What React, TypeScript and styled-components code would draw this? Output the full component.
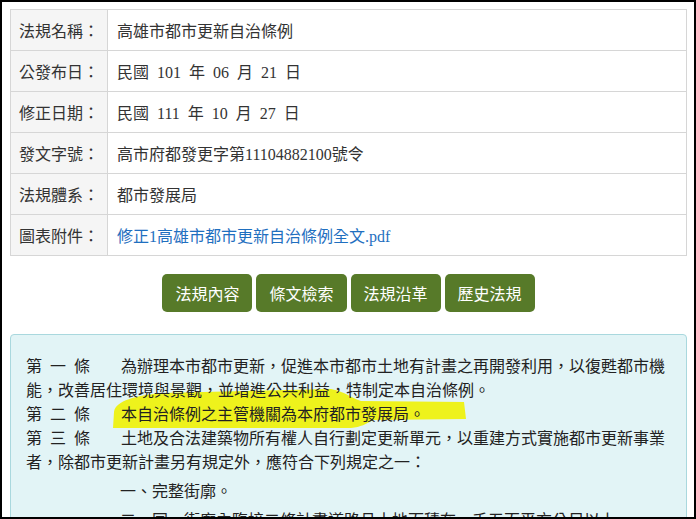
import React from 'react'
import styled, { createGlobalStyle } from 'styled-components'

const GlobalStyle = createGlobalStyle`
  html, body {
    margin: 0;
    padding: 0;
    background: #fff;
  }
`

const cjk = `"Noto Sans CJK TC", "Noto Sans", sans-serif`
const mixed = `"Liberation Serif", "Noto Sans CJK TC", serif`

const Frame = styled.div`
  width: 696px;
  height: 519px;
  box-sizing: border-box;
  border: 2px solid #000;
  overflow: hidden;
  padding: 7px 7px 0 8px;
  background: #fff;
  font-family: ${cjk};
`

const InfoTable = styled.table`
  width: 100%;
  border-collapse: collapse;
  font-size: 16px;
  color: #333;
`

const Row = styled.tr`
  height: 41px;
`

const Label = styled.th`
  width: 80px;
  padding: 0 8px;
  text-align: left;
  font-weight: 400;
  background: #f5f5f5;
  border: 1px solid #d6d6d6;
  white-space: nowrap;
`

const Value = styled.td`
  padding: 0 9px;
  border: 1px solid #d6d6d6;
  font-family: ${mixed};
  word-spacing: 4px;
`

const FileLink = styled.a`
  color: #1f6fbf;
  text-decoration: none;
  word-spacing: 0;
`

const ButtonBar = styled.div`
  display: flex;
  justify-content: center;
  gap: 4px;
  margin: 18px 0 22px;
`

const TabButton = styled.button`
  height: 38px;
  padding: 0 13px;
  border: none;
  border-radius: 5px;
  background: #577a29;
  color: #fff;
  font-family: ${cjk};
  font-size: 16px;
  cursor: pointer;
`

const ContentBox = styled.div`
  position: relative;
  z-index: 0;
  padding: 18px 14px 0 15px;
  background: #e2f4f6;
  border: 1px solid #a9d8de;
  border-radius: 4px;
  font-size: 16px;
  line-height: 24px;
  color: #222;
  height: 300px;
`

const Article = styled.div``

const ArticleNo = styled.span`
  display: inline-block;
  width: 95px;
  white-space: pre;
  word-spacing: 4.4px;
`

const Item = styled.div`
  margin-top: 5px;
  padding-left: 94px;
`

const Highlight = styled.svg`
  position: absolute;
  left: 102px;
  top: 54px;
  z-index: -1;
`

const rows: [string, React.ReactNode][] = [
  ['法規名稱：', '高雄市都市更新自治條例'],
  ['公發布日：', '民國 101 年 06 月 21 日'],
  ['修正日期：', '民國 111 年 10 月 27 日'],
  ['發文字號：', '高市府都發更字第11104882100號令'],
  ['法規體系：', '都市發展局'],
  ['圖表附件：', <FileLink href="#">修正1高雄市都市更新自治條例全文.pdf</FileLink>],
]

const buttons = ['法規內容', '條文檢索', '法規沿革', '歷史法規']

export default function App() {
  return (
    <>
      <GlobalStyle />
      <Frame>
        <InfoTable>
          <tbody>
            {rows.map(([label, value]) => (
              <Row key={label}>
                <Label>{label}</Label>
                <Value>{value}</Value>
              </Row>
            ))}
          </tbody>
        </InfoTable>

        <ButtonBar>
          {buttons.map((b) => (
            <TabButton key={b}>{b}</TabButton>
          ))}
        </ButtonBar>

        <ContentBox>
          {/* marker stroke drawn over article 2 */}
          <Highlight width="366" height="42" viewBox="0 0 366 42">
            <path
              d="M1,23 C3,11 23,7 48,4 L218,0 C233,3 238,9 248,12 L351,13 L353,30 L260,31 C253,35 248,38 238,39 L0,39 Z"
              fill="#eef21c"
            />
          </Highlight>
          <Article>
            <ArticleNo>第 一 條</ArticleNo>
            為辦理本市都市更新，促進本市都市土地有計畫之再開發利用，以復甦都市機能，改善居住環境與景觀，並增進公共利益，特制定本自治條例。
          </Article>
          <Article>
            <ArticleNo>第 二 條</ArticleNo>
            本自治條例之主管機關為本府都市發展局。
          </Article>
          <Article>
            <ArticleNo>第 三 條</ArticleNo>
            土地及合法建築物所有權人自行劃定更新單元，以重建方式實施都市更新事業者，除都市更新計畫另有規定外，應符合下列規定之一：
          </Article>
          <Item>一、完整街廓。</Item>
          <Item>二、同一街廓內臨接二條計畫道路且土地面積在一千五百平方公尺以上。</Item>
        </ContentBox>
      </Frame>
    </>
  )
}
